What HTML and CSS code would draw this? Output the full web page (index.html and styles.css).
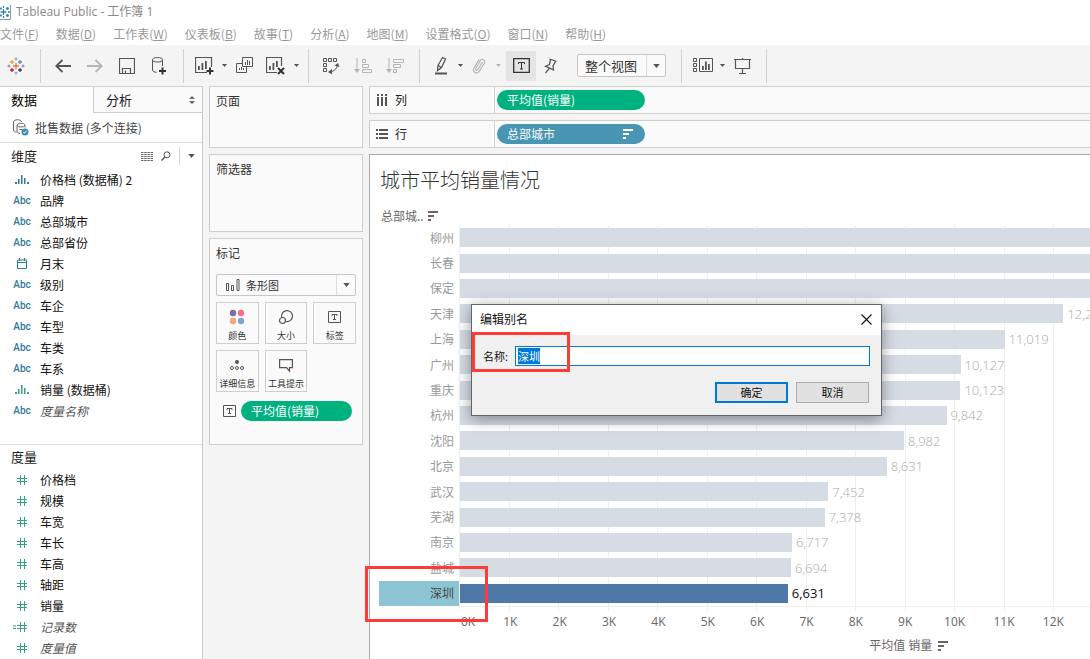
FILE: index.html
```html
<!DOCTYPE html>
<html lang="zh-CN">
<head>
<meta charset="utf-8">
<title>Tableau Public - 工作簿 1</title>
<link rel="stylesheet" href="styles.css">
</head>
<body>
<svg class="defs" width="0" height="0" aria-hidden="true">
  <symbol id="caret" viewBox="0 0 8 5"><path d="M0 0h8L4 5z" fill="currentColor"/></symbol>
  <symbol id="caret-s" viewBox="0 0 5 3"><path d="M0 0h5L2.500 3z" fill="currentColor"/></symbol>
  <symbol id="sort" viewBox="0 0 10 10"><path d="M0 0h10v2H0zM0 4h6v2H0zM0 8h3v2H0z" fill="currentColor"/></symbol>
  <symbol id="hash" viewBox="0 0 10 10"><path d="M3.500 0v10M7.500 0v10M0 3.500h10M0 6.500h10" stroke="currentColor" fill="none"/></symbol>
  <symbol id="bins" viewBox="0 0 14 9"><path d="M0 7h2v2H0zM3 4h1.500v5H3zM6 0h1.500v9H6zM9 3h1.500v6H9zM12 7h2v2h-2z" fill="currentColor"/></symbol>
  <symbol id="label-t" viewBox="0 0 13 12"><path d="M.5.500h12v11H.5zM4 5V3.500h5V5M6.500 3.500v5M5 8.500h3" stroke="currentColor" fill="none"/></symbol>
</svg>
<div class="app">
  <header class="titlebar">
    <svg class="app-icon" width="11" height="16" viewBox="0 0 11 16"><path d="M10.500 1v14.500H0" stroke="#999" fill="none"/><path d="M3.500 5v6M.5 8h6M0 4.500h2M1 3.500v2M6 4.500h3M7.500 3v3M6 11.500h3M7.500 10v3M0 11.500h2M1 10.500v2M3.500 2v2M3.500 12v2M8 8h2" stroke="#2f86b0" stroke-width="1.300" fill="none"/></svg>
    <h1>Tableau Public - 工作簿 1</h1>
  </header>
  <nav class="menu">
    <button>文件(<u>F</u>)</button><button>数据(<u>D</u>)</button><button>工作表(<u>W</u>)</button><button>仪表板(<u>B</u>)</button><button>故事(<u>T</u>)</button><button>分析(<u>A</u>)</button><button>地图(<u>M</u>)</button><button>设置格式(<u>O</u>)</button><button>窗口(<u>N</u>)</button><button>帮助(<u>H</u>)</button>
  </nav>
  <div class="toolbar">
    <button class="tool wide" aria-label="起始页"><svg width="18" height="18" viewBox="0 0 18 18" fill="none"><path d="M9 6v6M6 9h6" stroke="#eb7a3c" stroke-width="1.400"/><path d="M5 3v4M3 5h4" stroke="#f0a03c" stroke-width="1.300"/><path d="M13 3v4M11 5h4" stroke="#5b94ad" stroke-width="1.300"/><path d="M5 11v4M3 13h4" stroke="#c8213c" stroke-width="1.300"/><path d="M13 11v4M11 13h4" stroke="#29447e" stroke-width="1.300"/><path d="M9 .5v3M7.500 2h3M9 14.500v3M7.500 16h3" stroke="#7a9db5"/><path d="M2 7.500v3M.5 9h3M16 7.500v3M14.500 9h3" stroke="#7b82ad"/></svg></button>
    <span class="sep"></span>
    <button class="tool wide" aria-label="撤消"><svg width="16" height="14" viewBox="0 0 16 14"><path d="M16 7H1M7.500 1 1.200 7l6.300 6" stroke="#555" stroke-width="1.800" fill="none"/></svg></button>
    <button class="tool wide" aria-label="重做"><svg width="16" height="14" viewBox="0 0 16 14"><path d="M0 7h15M8.500 1l6.300 6-6.300 6" stroke="#b5b5b5" stroke-width="1.800" fill="none"/></svg></button>
    <button class="tool wide" aria-label="保存"><svg width="16" height="16" viewBox="0 0 16 16"><path d="M.5.500h15v15H.5zM3.500 15.500v-5h8v5M6.500 15v-2.500" stroke="#555" fill="none" stroke-width="1.200"/></svg></button>
    <button class="tool wide" aria-label="新建数据源"><svg width="16" height="18" viewBox="0 0 16 18"><path d="M1.500 3v10c0 1.500 2 2.300 4 2.300M11.500 3v6" stroke="#555" fill="none"/><ellipse cx="6.500" cy="2.800" rx="5" ry="2.200" stroke="#555" fill="none"/><path d="M11.500 10.500v7M8 14h7" stroke="#333" stroke-width="2"/></svg></button>
    <span class="sep"></span>
    <button class="tool" aria-label="新建工作表"><svg width="20" height="18" viewBox="0 0 20 18"><path d="M12 15.500H.5V.5h16V10" stroke="#555" fill="none" stroke-width="1.200"/><path d="M3 9h1.800v4H3zM6.500 6h1.800v7H6.500zM10 4h1.800v8H10z" fill="#555"/><path d="M15 10.500v7M11.500 14h7" stroke="#333" stroke-width="2"/></svg></button>
    <button class="drop" aria-label="更多"><svg width="5" height="3"><use href="#caret-s"/></svg></button>
    <button class="tool wide" aria-label="复制"><svg width="17" height="17" viewBox="0 0 17 17"><path d="M6.500.500h10v9h-10zM6.500 6.500h-6v9h10V9.500" stroke="#555" fill="none"/><path d="M9.500 8V5M11.500 8V3M13.500 8V4M3.500 13v-2M5.500 13v-3M7.500 13v-2" stroke="#555"/></svg></button>
    <button class="tool wide" aria-label="清除"><svg width="20" height="18" viewBox="0 0 20 18"><path d="M11 15.500H.5V.5h15V9" stroke="#555" fill="none" stroke-width="1.200"/><path d="M3 9h1.800v4H3zM6.500 6h1.800v7H6.500zM10 4h1.800v6H10z" fill="#555"/><path d="m12 11 6 6M18 11l-6 6" stroke="#333" stroke-width="2"/></svg></button>
    <button class="drop" aria-label="更多"><svg width="5" height="3"><use href="#caret-s"/></svg></button>
    <span class="sep"></span>
    <button class="tool wide" aria-label="交换行和列"><svg width="18" height="18" viewBox="0 0 18 18"><path d="M1.500 1.500h3v3h-3zM6.500 1.500h3v3h-3zM11.500 1.500h3v3h-3zM1.500 6.500h3v3h-3zM1.500 11.500h3v3h-3zM8 15c4-.5 6.500-3 7.500-6.500" stroke="#555" fill="none"/><path d="m12.500 8.500 3.500-2.500 1.500 4zM10 12v5.500L6 15z" fill="#555"/></svg></button>
    <button class="tool wide" aria-label="升序"><svg width="18" height="16" viewBox="0 0 18 16"><path d="M3 0v12M8.500 1.500h3v3h-3zM8.500 6.500h6v3h-6zM8.500 11.500h9v3h-9z" stroke="#b5b5b5" fill="none"/><path d="M0 11h6l-3 4z" fill="#b5b5b5"/></svg></button>
    <button class="tool wide" aria-label="降序"><svg width="18" height="16" viewBox="0 0 18 16"><path d="M3 0v12M7.500 1.500h10v3h-10zM7.500 6.500h7v3h-7zM7.500 11.500h3v3h-3z" stroke="#b5b5b5" fill="none"/><path d="M0 11h6l-3 4z" fill="#b5b5b5"/></svg></button>
    <span class="sep"></span>
    <button class="tool" aria-label="突出显示"><svg width="14" height="19" viewBox="0 0 14 19"><path d="M4 9.500 8.500 1.500 11.500 3 7.500 11.500 3.500 14.500zM4 9.500l3.500 2" stroke="#555" fill="none" stroke-width="1.300"/><path d="M1 17.500h12" stroke="#555" stroke-width="2"/></svg></button>
    <button class="drop" aria-label="更多"><svg width="5" height="3"><use href="#caret-s"/></svg></button>
    <button class="tool" aria-label="组成员"><svg width="14" height="17" viewBox="0 0 14 17"><path d="M10.500 5 6 12.500c-1 1.600-3 .4-2.200-1L8 4c1.800-3 6-1 4.500 2L7.500 14c-2.500 4-8 1-5.500-3L7 2.500" stroke="#b5b5b5" fill="none" stroke-width="1.200"/></svg></button>
    <button class="drop faint" aria-label="更多"><svg width="5" height="3"><use href="#caret-s"/></svg></button>
    <button class="tool pressed" aria-label="显示标记标签"><svg width="17" height="15" viewBox="0 0 17 15"><path d="M.7.700h15.600v13.600H.7z" stroke="#333" fill="none" stroke-width="1.300"/><path d="M5.500 6V4.500h6V6M8.500 4.500v6.500M7 11h3" stroke="#333" fill="none"/></svg></button>
    <button class="tool" aria-label="固定轴"><svg width="14" height="16" viewBox="0 0 14 16"><path d="M5.500 1 12.500 3.500M6.500 1.500 5.500 6.500 1.500 8.200 9.500 12 9 8 11.500 3.500M5.500 10.200 1.500 15" stroke="#555" fill="none" stroke-width="1.300"/></svg></button>
    <div class="combo fit">
      <select aria-label="适合"><option>整个视图</option></select>
      <svg width="7" height="4"><use href="#caret"/></svg>
    </div>
    <span class="sep"></span>
    <button class="tool" aria-label="显示/隐藏卡"><svg width="20" height="15" viewBox="0 0 20 15"><path d="M.5.500h3v3h-3zM.5 5.500h3v3h-3zM.5 10.500h3v3h-3zM6.500.500h13v13h-13z" stroke="#555" fill="none"/><path d="M9 8h1.800v4H9zM12 3.500h1.800V12H12zM15 6h1.800v6H15z" fill="#555"/></svg></button>
    <button class="drop" aria-label="更多"><svg width="5" height="3"><use href="#caret-s"/></svg></button>
    <button class="tool wide" aria-label="演示模式"><svg width="17" height="16" viewBox="0 0 17 16"><path d="M0 1.500h17M8.500 0v1M1.500 2v8.500h14V2M8.500 10.500v5M5 15.500h7" stroke="#555" fill="none" stroke-width="1.200"/></svg></button>
    <span class="sep"></span>
  </div>

  <main class="body">
    <aside class="data-pane">
      <div class="tabs">
        <button class="tab active">数据</button>
        <button class="tab">分析<svg width="6" height="8" viewBox="0 0 6 8"><path d="M0 3 3 0l3 3zM0 5l3 3 3-3z" fill="#666"/></svg></button>
      </div>
      <div class="source">
        <svg width="17" height="17" viewBox="0 0 17 17"><path d="M1.500 3v8c0 1.500 1.500 2 3 2.200M1.500 3c0-3 8-3 8 0M5 6.500c0-3 8-3 8 0v2M5 6.500v5.500c0 1.500 1.500 2.500 3 2.500M5 6.500c1 2 7 2 8 0M7.500 10.500h3" stroke="#666" fill="none"/><circle cx="13" cy="13" r="3.500" fill="#3d8bab"/><path d="m11.500 13 1 1.200 2-2.400" stroke="#fff" fill="none"/></svg>
        <span>批售数据 (多个连接)</span>
      </div>
      <section class="fields dims">
        <div class="fields-head">
          <h2>维度</h2>
          <button aria-label="查看数据"><svg width="12" height="9" viewBox="0 0 12 9"><path d="M0 .5h12M0 2.500h12M0 4.500h12M0 6.500h12M0 8.500h12" stroke="#666" stroke-dasharray="2.500 .7"/></svg></button>
          <button aria-label="查找字段"><svg width="10" height="10" viewBox="0 0 10 10"><circle cx="6" cy="3.800" r="3" stroke="#555" fill="none"/><path d="M4 6 .5 9.500" stroke="#555" stroke-width="1.400"/></svg></button>
          <span class="rule"></span>
          <button aria-label="菜单"><svg width="7" height="4"><use href="#caret"/></svg></button>
        </div>
        <ul>
          <li><i><svg width="14" height="9"><use href="#bins"/></svg></i>价格档 (数据桶) 2</li>
          <li><i>Abc</i>品牌</li>
          <li><i>Abc</i>总部城市</li>
          <li><i>Abc</i>总部省份</li>
          <li><i><svg width="10" height="11" viewBox="0 0 10 11"><path d="M.5 2h9v8.500h-9zM0 4.500h10M2.500 0v3M7.500 0v3" stroke="currentColor" fill="none"/></svg></i>月末</li>
          <li><i>Abc</i>级别</li>
          <li><i>Abc</i>车企</li>
          <li><i>Abc</i>车型</li>
          <li><i>Abc</i>车类</li>
          <li><i>Abc</i>车系</li>
          <li><i class="green"><svg width="14" height="9"><use href="#bins"/></svg></i>销量 (数据桶)</li>
          <li class="generated"><i>Abc</i><em>度量名称</em></li>
        </ul>
      </section>
      <section class="fields measures">
        <div class="fields-head"><h2>度量</h2></div>
        <ul>
          <li><i><svg width="10" height="10"><use href="#hash"/></svg></i>价格档</li>
          <li><i><svg width="10" height="10"><use href="#hash"/></svg></i>规模</li>
          <li><i><svg width="10" height="10"><use href="#hash"/></svg></i>车宽</li>
          <li><i><svg width="10" height="10"><use href="#hash"/></svg></i>车长</li>
          <li><i><svg width="10" height="10"><use href="#hash"/></svg></i>车高</li>
          <li><i><svg width="10" height="10"><use href="#hash"/></svg></i>轴距</li>
          <li><i><svg width="10" height="10"><use href="#hash"/></svg></i>销量</li>
          <li class="generated"><i><svg width="18" height="10" viewBox="0 0 18 10"><path d="M7.500 0v10M11.500 0v10M4 3.500h10M4 6.500h10M0 4h3M0 6.500h3" stroke="currentColor" fill="none"/></svg></i><em>记录数</em></li>
          <li class="generated"><i><svg width="10" height="10"><use href="#hash"/></svg></i><em>度量值</em></li>
        </ul>
      </section>
    </aside>

    <div class="cards">
      <section class="card pages"><h2>页面</h2></section>
      <section class="card filters"><h2>筛选器</h2></section>
      <section class="card marks">
        <h2>标记</h2>
        <div class="combo mark-type">
          <svg class="lead" width="14" height="12" viewBox="0 0 14 12"><path d="M.5 4.500h2v7h-2zM5.500 6.500h2v5h-2zM11 .5h2v11h-2z" stroke="#555" fill="none"/></svg>
          <select aria-label="标记类型"><option>条形图</option></select>
          <svg width="7" height="4"><use href="#caret"/></svg>
        </div>
        <div class="mark-grid">
          <button><svg width="16" height="16" viewBox="0 0 16 16"><circle cx="4" cy="4" r="3.200" fill="#846c99"/><circle cx="12" cy="4" r="3.200" fill="#fb6e83"/><circle cx="4" cy="12" r="3.200" fill="#f4a77c"/><circle cx="12" cy="12" r="3.200" fill="#7fa5cf"/></svg>颜色</button>
          <button><svg width="16" height="16" viewBox="0 0 16 16"><path d="M3.700 8.500A5.500 5.500 0 1 1 8 12.500" stroke="#555" fill="none" stroke-width="1.200"/><circle cx="4.500" cy="11.500" r="3" stroke="#555" fill="none" stroke-width="1.200"/></svg>大小</button>
          <button><svg width="13" height="16" viewBox="0 -2 13 16"><use href="#label-t" width="13" height="12"/></svg>标签</button>
          <button><svg width="14" height="16" viewBox="0 0 14 16"><circle cx="7" cy="5" r="2" fill="#555"/><g stroke="#555" fill="none"><circle cx="2" cy="11" r="1.500"/><circle cx="7" cy="11" r="1.500"/><circle cx="12" cy="11" r="1.500"/></g></svg>详细信息</button>
          <button><svg width="14" height="16" viewBox="0 0 14 16"><path d="M.6 2.600h12.800v8H10.500v3.500L7.500 10.600H.6z" stroke="#555" fill="none" stroke-width="1.200"/></svg>工具提示</button>
        </div>
        <div class="encoding">
          <svg width="13" height="12"><use href="#label-t"/></svg>
          <button class="pill green">平均值(销量)</button>
        </div>
      </section>
    </div>

    <div class="workspace">
      <div class="shelf">
        <div class="shelf-name"><svg width="12" height="12" viewBox="0 0 12 12"><path d="M1 0h2v2H1zM1 3h2v9H1zM5 0h2v2H5zM5 3h2v9H5zM9 0h2v2H9zM9 3h2v9H9z" fill="#555"/></svg>列</div>
        <button class="pill green">平均值(销量)</button>
      </div>
      <div class="shelf">
        <div class="shelf-name"><svg width="12" height="10" viewBox="0 0 12 10"><path d="M0 0h2v2H0zM3 0h9v2H3zM0 4h2v2H0zM3 4h9v2H3zM0 8h2v2H0zM3 8h9v2H3z" fill="#555"/></svg>行</div>
        <button class="pill blue">总部城市<svg width="10" height="10"><use href="#sort"/></svg></button>
      </div>
      <section class="view">
        <h2>城市平均销量情况</h2>
        <div class="row-head">总部城..<svg width="10" height="10"><use href="#sort"/></svg></div>
        <div class="chart">
          <div class="cities">
            <span>柳州</span><span>长春</span><span>保定</span><span>天津</span><span>上海</span><span>广州</span><span>重庆</span><span>杭州</span><span>沈阳</span><span>北京</span><span>武汉</span><span>芜湖</span><span>南京</span><span>盐城</span><span class="selected">深圳<b class="callout"></b></span>
          </div>
          <div class="plot">
            <div class="scale">
              <div class="gridlines"><i></i><i></i><i></i><i></i><i></i><i></i><i></i><i></i><i></i><i></i><i></i><i></i><i></i></div>
              <div class="bars">
                <div><i style="width:100%"></i></div>
                <div><i style="width:100%"></i></div>
                <div><i style="width:100%"></i></div>
                <div><i style="width:93.900%"></i>12,2</div>
                <div><i style="width:84.760%"></i>11,019</div>
                <div><i style="width:77.900%"></i>10,127</div>
                <div><i style="width:77.870%"></i>10,123</div>
                <div><i style="width:75.710%"></i>9,842</div>
                <div><i style="width:69.090%"></i>8,982</div>
                <div><i style="width:66.390%"></i>8,631</div>
                <div><i style="width:57.320%"></i>7,452</div>
                <div><i style="width:56.750%"></i>7,378</div>
                <div><i style="width:51.670%"></i>6,717</div>
                <div><i style="width:51.490%"></i>6,694</div>
                <div class="selected"><i style="width:51.010%"></i>6,631</div>
              </div>
              <div class="axis"><span>0K</span><span>1K</span><span>2K</span><span>3K</span><span>4K</span><span>5K</span><span>6K</span><span>7K</span><span>8K</span><span>9K</span><span>10K</span><span>11K</span><span>12K</span><span></span></div>
            </div>
            <div class="axis-title">平均值 销量<svg width="10" height="10"><use href="#sort"/></svg></div>
          </div>
        </div>
      </section>
    </div>
  </main>

  <form class="dialog" role="dialog" aria-labelledby="dlg-title">
    <div class="dialog-head">
      <h2 id="dlg-title">编辑别名</h2>
      <button type="button" aria-label="关闭"><svg width="11" height="11" viewBox="0 0 11 11"><path d="m.5.500 10 10M10.500.500l-10 10" stroke="#111" stroke-width="1.100"/></svg></button>
    </div>
    <div class="dialog-body">
      <div class="name-row">
        <label for="alias">名称:</label>
        <input id="alias" type="text" value="深圳" autocomplete="off">
      </div>
      <div class="actions">
        <button type="button" class="primary">确定</button>
        <button type="button">取消</button>
      </div>
      <b class="callout"></b>
    </div>
  </form>
</div>
<script src="app.js"></script>
</body>
</html>
```

FILE: styles.css
```css
* { box-sizing: border-box; }

body {
  margin: 0;
  background: #f4f4f4;
  color: #222;
  font: 12px/18px "Noto Sans CJK SC", "Open Sans", sans-serif;
}

h1, h2, ul { margin: 0; padding: 0; font-weight: 400; }
ul { list-style: none; }
i { font-style: normal; }
svg { flex: none; display: block; }
.defs { position: absolute; }

button {
  margin: 0;
  padding: 0;
  border: 0;
  background: none;
  color: inherit;
  font: inherit;
}

.app {
  position: relative;
  display: flex;
  flex-direction: column;
  height: 100vh;
  overflow: hidden;
}

/* Title bar and menu */
.titlebar {
  display: flex;
  align-items: center;
  gap: 5px;
  height: 23px;
  background: #fff;
  color: #888;
}
.titlebar h1 { font: 12px/18px "Open Sans", "Noto Sans CJK SC", sans-serif; }
.menu {
  display: flex;
  align-items: center;
  gap: 17px;
  height: 22px;
  background: #fff;
  color: #999;
}

/* Toolbar */
.toolbar {
  display: flex;
  align-items: center;
  height: 41px;
}
.toolbar .sep {
  width: 1px;
  height: 34px;
  margin: 0 6px 0 8px;
  background: #d0d0d0;
}
.tool, .drop {
  display: flex;
  align-items: center;
  justify-content: center;
  width: 30px;
  height: 30px;
}
.tool.wide { width: 32px; }
.drop { width: 8px; color: #555; }
.drop.faint { color: #b5b5b5; }
.pressed { margin-left: 4px; background: #e4e4e4; }

.combo {
  display: flex;
  align-items: center;
  border: 1px solid #c6c6c6;
  border-radius: 2px;
  background: #fafafa;
  color: #555;
}
.combo select {
  flex: 1;
  height: 100%;
  min-width: 0;
  margin: 0 6px 0 0;
  padding: 0 0 0 7px;
  border: 0;
  border-right: 1px solid #ddd;
  border-radius: 0;
  background: none;
  appearance: none;
  color: #333;
  font: 13px/20px "Noto Sans CJK SC", sans-serif;
}
.combo svg:last-child { margin-right: 5px; }
.fit { width: 89px; height: 23px; margin: 0 7px 0 11px; }

/* Work area */
.body {
  flex: 1;
  min-height: 0;
  display: grid;
  grid-template-columns: 203px 154px 1fr;
  gap: 6px;
}

.data-pane {
  display: flex;
  flex-direction: column;
  border-right: 1px solid #c9c9c9;
  background: #fff;
  overflow: hidden;
}
.tabs {
  display: grid;
  grid-template-columns: 93px 1fr;
  flex: none;
  height: 27px;
  border-top: 1px solid #cfcfcf;
}
.tab {
  display: flex;
  align-items: center;
  justify-content: space-between;
  padding: 0 7px 0 12px;
  border-left: 1px solid #cfcfcf;
  border-bottom: 1px solid #cfcfcf;
  background: #fafafa;
  font-size: 13px;
}
.tab.active { padding-left: 11px; border: 0; background: #fff; color: #000; }
.source {
  display: flex;
  align-items: center;
  gap: 6px;
  flex: none;
  height: 30px;
  padding-left: 12px;
  border-bottom: 1px solid #e0e0e0;
  color: #444;
}
.fields-head {
  display: flex;
  align-items: center;
  gap: 8px;
  height: 26px;
  padding: 0 7px 0 11px;
}
.fields-head h2 { flex: 1; font-size: 13px; }
.fields-head button { color: #555; }
.rule { width: 1px; height: 18px; background: #d0d0d0; }
.dims { flex: none; height: 302px; border-bottom: 1px solid #e0e0e0; }
.measures .fields-head { height: 24px; }
.fields li {
  display: grid;
  grid-template-columns: 36px 1fr;
  align-items: center;
  height: 21px;
  padding-left: 4px;
  color: #111;
}
.fields li i {
  display: flex;
  justify-content: center;
  color: #31799a;
  font: 500 10px/14px Roboto, sans-serif;
}
.measures li i, .fields li i.green { color: #36a37b; }
.fields li.generated { color: #555; }

/* Cards */
.cards { display: flex; flex-direction: column; gap: 6px; }
.card {
  flex: none;
  padding: 5px 6px;
  border: 1px solid #cfcfcf;
  background: #fafafa;
  color: #333;
}
.card h2 { font-size: 12px; }
.pages { height: 62px; }
.filters { height: 78px; }
.marks { height: 207px; }
.mark-type { height: 22px; margin-top: 12px; }
.mark-type .lead { margin-left: 9px; }
.mark-type select { padding-left: 6px; font-size: 11px; }
.mark-grid {
  display: grid;
  grid-template-columns: repeat(3, 1fr);
  gap: 6px;
  margin-top: 6px;
}
.mark-grid button {
  display: flex;
  flex-direction: column;
  align-items: center;
  justify-content: flex-end;
  gap: 4px;
  height: 42px;
  border: 1px solid #cfcfcf;
  font-size: 9px;
  line-height: 14px;
  white-space: nowrap;
}
.mark-grid svg { color: #555; }
.encoding {
  display: flex;
  align-items: center;
  gap: 5px;
  margin-top: 9px;
  padding: 0 4px 0 7px;
  color: #555;
}
.pill {
  display: flex;
  align-items: center;
  justify-content: space-between;
  width: 148px;
  height: 20px;
  padding: 0 12px 0 10px;
  border-radius: 10px;
  color: #fff;
}
.pill.green { background: #00b180; }
.pill.blue { background: #4996b2; }
.encoding .pill { flex: 1; }

/* Shelves */
.workspace { display: flex; flex-direction: column; gap: 6px; min-width: 0; }
.shelf {
  display: flex;
  align-items: center;
  gap: 2px;
  flex: none;
  height: 28px;
  border: 1px solid #cfcfcf;
  border-right: 0;
  background: #fafafa;
}
.shelf-name {
  display: flex;
  align-items: center;
  gap: 7px;
  width: 125px;
  height: 100%;
  padding-left: 6px;
  border-right: 1px solid #cfcfcf;
}

/* View */
.view {
  flex: 1;
  padding: 10px 0 0 9px;
  border: 1px solid #aaa;
  border-width: 1px 0 0 1px;
  background: #fff;
  color: #666;
}
.view h2 {
  padding-left: 1px;
  color: #333;
  font-size: 20px;
  font-weight: 300;
  line-height: 30px;
}
.row-head {
  display: flex;
  align-items: center;
  gap: 4px;
  margin-top: 12px;
  padding-left: 2px;
}
.chart { display: grid; grid-template-columns: 80px 1fr; }
.cities {
  display: grid;
  grid-template-rows: repeat(15, 1fr);
  height: 381px;
  color: #999;
}
.cities span {
  display: flex;
  align-items: center;
  justify-content: flex-end;
  padding-right: 5px;
}
.cities .selected { position: relative; background: #8dc4d3; color: #444; }
.callout {
  position: absolute;
  border: 3px solid #ff3b38;
  pointer-events: none;
}
.cities .callout { inset: -15px -29px -16px -14px; z-index: 1; }

.plot { overflow: hidden; font-family: "Open Sans", "Noto Sans CJK SC", sans-serif; }
.scale { display: grid; width: 102%; }
.gridlines, .bars { grid-area: 1 / 1; }
.gridlines { display: flex; height: 386px; }
.gridlines i { flex: 1; border-left: 1px solid #efefef; }
.bars {
  display: grid;
  grid-template-rows: repeat(15, 1fr);
  height: 382px;
  border-bottom: 1px solid #efefef;
}
.bars div {
  display: flex;
  align-items: center;
  gap: 4px;
  padding-left: 1px;
  color: #aaa;
  font-size: 13px;
  font-weight: 300;
}
.bars i { flex: none; height: 19px; background: #d5dce4; }
.bars .selected { color: #111; font-weight: 400; }
.bars .selected i { background: #4e79a7; }
.axis { display: flex; padding-top: 2px; color: #666; text-align: center; }
.axis span { flex: 2 1 0; }
.axis span:first-child { flex: 1 1 0; padding-left: 2px; text-align: left; }
.axis span:last-child { flex: 1 1 0; }
.axis-title {
  display: flex;
  align-items: center;
  gap: 6px;
  margin-top: 6px;
  padding-left: 65%;
}

/* Alias dialog */
.dialog {
  position: absolute;
  left: 471px;
  top: 304px;
  width: 411px;
  border: 1px solid #63676b;
  background: #f0f0f0;
  color: #111;
  box-shadow: 0 3px 14px rgba(0, 0, 0, .4);
}
.dialog-head {
  display: flex;
  align-items: center;
  justify-content: space-between;
  height: 30px;
  padding: 0 9px 2px 8px;
  background: #fff;
}
.dialog-head h2 { font-size: 12px; }
.dialog-body {
  position: relative;
  padding: 11px 11px 12px;
  font-size: 11px;
}
.name-row { display: flex; align-items: center; gap: 7px; }
.name-row input {
  flex: 1;
  height: 20px;
  padding: 0 2px;
  border: 1px solid #0078d7;
  border-radius: 0;
  outline: 0;
  background: #fff;
  color: #111;
  font: 11px/14px "Noto Sans CJK SC", sans-serif;
}
.name-row input::selection { background: #0078d7; color: #fff; }
.actions {
  display: flex;
  justify-content: flex-end;
  gap: 8px;
  margin-top: 16px;
  padding-right: 1px;
}
.actions button {
  width: 73px;
  height: 21px;
  border: 1px solid #adadad;
  background: #e1e1e1;
  line-height: 17px;
}
.actions .primary { border: 2px solid #0078d7; }
.dialog-body .callout { left: 0; top: -3px; width: 98px; height: 40px; }
```

FILE: app.js
```js
const alias = document.getElementById('alias');
alias.focus();
alias.select();
```
